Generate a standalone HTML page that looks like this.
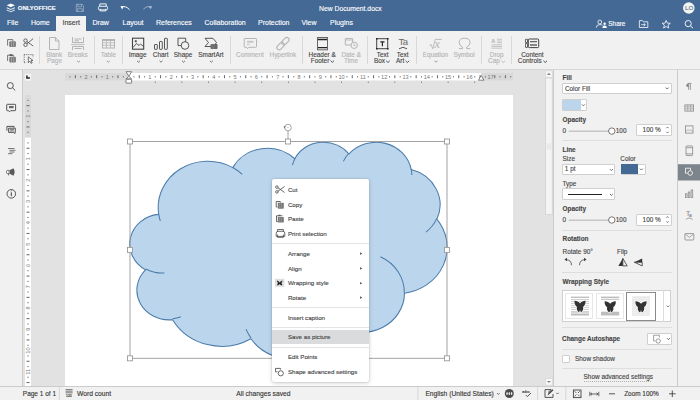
<!DOCTYPE html>
<html><head><meta charset="utf-8">
<style>
*{box-sizing:border-box}
html,body{margin:0;padding:0;width:700px;height:400px;overflow:hidden;background:#e2e2e2;font-family:"Liberation Sans",sans-serif;color:#444}
.a{position:absolute}
.t{position:absolute;white-space:nowrap;line-height:0;-webkit-text-stroke:0.12px currentColor}
#hdr{left:0;top:0;width:700px;height:31px;background:#446995}
#tb{left:0;top:31px;width:700px;height:39px;background:#f1f1f1;border-bottom:1px solid #d6d6d6}
#lsb{left:0;top:70px;width:23px;height:316px;background:#f1f1f1;border-right:1px solid #cbcbcb}
#rp{left:553px;top:70px;width:125px;height:316px;background:#f1f1f1;border-left:1px solid #cbcbcb;border-right:1px solid #cbcbcb}
#ric{left:678px;top:70px;width:22px;height:316px;background:#f1f1f1}
#sb{left:0;top:386px;width:700px;height:14px;background:#f1f1f1;border-top:1px solid #cbcbcb}
.tab{position:absolute;top:16px;height:15px;color:#fff;font-size:7px}
.tl{font-size:6.42px;color:#444}
.dis{color:#b4b4b4}
.sep{position:absolute;width:1px;background:#dadada}
</style></head><body>
<!-- header -->
<div id="hdr" class="a"></div>
<svg class="a" style="left:0;top:0" width="700" height="31" viewBox="0 0 700 31">
<g fill="none">
<!-- logo -->
<path d="M10.8 3.4L14.9 5.3L10.8 7.2L6.7 5.3Z" fill="#fff"/>
<path d="M6.9 7.2L10.8 9L14.7 7.2L14.9 7.4V8.2L10.8 10.1L6.7 8.2V7.4Z" fill="#fff" opacity="0.9"/>
<path d="M6.9 9.4L10.8 11.2L14.7 9.4L14.9 9.6V10.4L10.8 12.3L6.7 10.4V9.6Z" fill="#fff" opacity="0.8"/>
<!-- save (disabled) -->
<path d="M76.3 4.3H82.2L83.5 5.6V11.4H76.3Z M77.8 4.3V6.8H81.5V4.3 M77.6 11.4V8.7H82.2V11.4" stroke="#fff" stroke-width="0.8" opacity="0.45"/>
<!-- print -->
<path d="M99.8 6.3V3.9H106.2V6.3" stroke="#fff" stroke-width="0.9"/>
<rect x="98.4" y="6.3" width="9.2" height="3.6" rx="1.3" stroke="#fff" stroke-width="0.9"/>
<path d="M100.2 8.8V10.9H105.8V8.8" stroke="#fff" stroke-width="0.9"/>
<!-- undo -->
<path d="M121.6 7.2Q125.5 5.2 129.6 9.8" stroke="#fff" stroke-width="1"/>
<path d="M120.4 6.3L123.8 6L122.2 9.6Z" fill="#fff"/>
<!-- redo disabled -->
<path d="M151.1 7.2Q147.2 5.2 143.4 9" stroke="#fff" stroke-width="1" opacity="0.45"/>
<path d="M152.3 6.3L148.9 6L150.5 9.6Z" fill="#fff" opacity="0.45"/>
<!-- avatar -->
<circle cx="688.8" cy="8" r="5.8" fill="#f3f3f3"/>
<!-- share icon -->
<circle cx="599.8" cy="22" r="1.9" stroke="#fff" stroke-width="0.8"/>
<path d="M596.3 27.7Q596.3 24.6 599.8 24.6Q601.8 24.6 602.6 25.4" stroke="#fff" stroke-width="0.8"/>
<circle cx="604.6" cy="23.8" r="1.2" fill="#fff"/>
<path d="M602.4 27.9Q602.4 25.6 604.6 25.6Q606.9 25.6 606.9 27.9Z" fill="#fff"/>
<!-- folder -->
<path d="M639.4 20.6H642.5L643.5 21.8H647.8V27.5H639.4Z" stroke="#fff" stroke-width="0.8"/>
<path d="M641.3 24.7H645.2M643.8 23.3L645.3 24.7L643.8 26.1" stroke="#fff" stroke-width="0.8"/>
<!-- star -->
<path d="M666.2 20.4L667.3 23.1L670.3 23.3L668 25.2L668.8 28L666.2 26.5L663.6 28L664.4 25.2L662.1 23.3L665.1 23.1Z" stroke="#fff" stroke-width="0.8"/>
<!-- search -->
<circle cx="688.2" cy="23.6" r="3.1" stroke="#fff" stroke-width="0.9"/>
<path d="M690.4 25.8L693 28.2" stroke="#fff" stroke-width="1"/>
</g>
</svg>
<div class="t" style="left:17.8px;top:7.9px;font-size:5.9px;font-weight:bold;color:#fff;letter-spacing:0.05px">ONLYOFFICE</div>
<div class="t" style="left:319px;top:8.5px;font-size:6.8px;color:#fff">New Document.docx</div>
<div class="t" style="left:685px;top:7.6px;font-size:6.2px;color:#55708f">LO</div>
<!-- tabs -->
<div class="a" style="left:56px;top:16px;width:30px;height:16px;background:#f1f1f1"></div>
<div class="t" style="left:7px;top:23px;font-size:7px;color:#fff">File</div>
<div class="t" style="left:31px;top:23px;font-size:7px;color:#fff">Home</div>
<div class="t" style="left:62.5px;top:23px;font-size:7px;color:#444">Insert</div>
<div class="t" style="left:92.5px;top:23px;font-size:7px;color:#fff">Draw</div>
<div class="t" style="left:122.5px;top:23px;font-size:7px;color:#fff">Layout</div>
<div class="t" style="left:156px;top:23px;font-size:7px;color:#fff">References</div>
<div class="t" style="left:204.5px;top:23px;font-size:7px;color:#fff">Collaboration</div>
<div class="t" style="left:258px;top:23px;font-size:7px;color:#fff">Protection</div>
<div class="t" style="left:301.5px;top:23px;font-size:7px;color:#fff">View</div>
<div class="t" style="left:330px;top:23px;font-size:7px;color:#fff">Plugins</div>
<div class="t" style="left:608.3px;top:24.4px;font-size:6.42px;color:#fff">Share</div>
<!-- toolbar -->
<div id="tb" class="a"></div>
<svg class="a" style="left:0;top:0" width="700" height="70" viewBox="0 0 700 70">
<g fill="none" stroke-width="1">
<!-- separators -->
<g stroke="#d8d8d8"><path d="M39.5 36V64M94.5 36V64M122.5 36V64M230.5 36V64M302.5 36V64M367.5 36V64M416.5 36V64M481.5 36V64M511.5 36V64"/></g>
<!-- copy -->
<path d="M7.6 45.6V39.6H12.8V41" stroke="#666" stroke-width="0.9"/>
<rect x="9.3" y="41.3" width="6.6" height="5.8" rx="1" fill="#7a7a7a"/>
<path d="M11.5 41.5V47M13.7 41.5V47" stroke="#c8c8c8" stroke-width="0.5"/>
<!-- scissors -->
<circle cx="25.5" cy="40.6" r="1.7" stroke="#444" stroke-width="0.8"/>
<circle cx="25.5" cy="44.8" r="1.7" stroke="#444" stroke-width="0.8"/>
<path d="M27 41.6L33.2 46M27 43.8L33.2 38.6" stroke="#444" stroke-width="0.8"/>
<!-- paste -->
<path d="M7.6 61V55.2H9.4M12.4 55.2H13.4V56.6" stroke="#666" stroke-width="0.9"/>
<rect x="9.3" y="54.2" width="3.4" height="1.8" rx="0.4" fill="#555"/>
<rect x="9.3" y="56.8" width="6.6" height="5.8" rx="1" fill="#7a7a7a"/>
<path d="M11.5 57V62.6M13.7 57V62.6" stroke="#c8c8c8" stroke-width="0.5"/>
<!-- select all -->
<path d="M24.2 54.6H33M24.2 54.6V62.6M33 54.6V57.2M24.2 62.6H26.4" stroke="#555" stroke-width="0.9" stroke-dasharray="1 1.1"/>
<path d="M28.3 56.8V62.8L29.9 61.2L31.2 63.4L32.2 62.9L31 60.7L33 60.5Z" stroke="#444" stroke-width="0.7" fill="#f1f1f1"/>
<!-- blank page -->
<path d="M49.5 37.5H55.5L59 41V49.5H49.5Z M55.5 37.5V41H59" stroke="#b4b4b4"/>
<!-- breaks -->
<path d="M72.5 37V42.5H83.5V37M74.5 39H81.5M74.5 40.8H79" stroke="#b4b4b4"/>
<path d="M71 44.5H84.5" stroke="#c4c4c4" stroke-width="1.2"/>
<path d="M72.5 50V46.5H83.5V50M74.5 48.5H81.5" stroke="#b4b4b4"/>
<!-- table -->
<rect x="102.5" y="39.5" width="12" height="8.5" stroke="#b4b4b4"/>
<path d="M102.5 40.2H114.5" stroke="#b4b4b4" stroke-width="1.5"/>
<path d="M102.5 42.8H114.5M102.5 45.3H114.5M106.5 40V48M110.5 40V48" stroke="#b4b4b4" stroke-width="0.8"/>
<!-- image -->
<rect x="132.5" y="38.2" width="11.2" height="11" stroke="#444" stroke-width="1.1"/>
<path d="M133 47.5L136.5 43.5L139 45.5L140.5 44L143.5 46.5" stroke="#444" stroke-width="0.9"/>
<path d="M135.8 40V42.4M134.6 41.2H137" stroke="#444" stroke-width="0.9"/>
<!-- chart -->
<rect x="154.5" y="44.5" width="2.8" height="4.8" rx="0.5" stroke="#444" stroke-width="0.9"/>
<rect x="159.5" y="41.5" width="2.8" height="7.8" rx="0.5" stroke="#444" stroke-width="0.9"/>
<rect x="164.5" y="38.3" width="2.8" height="11" rx="0.5" stroke="#444" stroke-width="0.9"/>
<!-- shape -->
<path d="M181.2 45.6H178V38.2H185.7V41.8" stroke="#444" stroke-width="0.9"/>
<circle cx="185" cy="45.5" r="3.8" stroke="#444" stroke-width="0.9" fill="none"/>
<!-- smartart -->
<path d="M205 38.3H213L216.5 42.5L213.5 46.5H205L208.5 42.5Z" stroke="#444" stroke-width="0.9"/>
<rect x="210.5" y="44" width="7" height="5" rx="0.8" fill="#666"/>
<path d="M212 44V49M214 44V49" stroke="#999" stroke-width="0.5"/>
<!-- comment -->
<path d="M245 38.5H255.7Q256.5 38.5 256.5 39.3V46.5Q256.5 47.3 255.7 47.3H248.8L247.5 48.7L246.8 47.3H245Q244.2 47.3 244.2 46.5V39.3Q244.2 38.5 245 38.5Z" stroke="#b4b4b4"/>
<path d="M247 41.8H253.5" stroke="#c8c8c8" stroke-width="2"/>
<path d="M247 44.4H249.5" stroke="#b4b4b4" stroke-width="0.8"/>
<!-- hyperlink -->
<g transform="rotate(-45 283 43.6)" stroke="#b4b4b4" stroke-width="1.1"><rect x="275.3" y="41.3" width="8.5" height="4.6" rx="2.3"/><rect x="282.2" y="41.3" width="8.5" height="4.6" rx="2.3"/></g>
<!-- header footer -->
<rect x="317.5" y="37.5" width="10" height="12.3" stroke="#666" stroke-width="1"/>
<path d="M318 39.5H327M318 47.6H327" stroke="#222" stroke-width="1.3"/>
<!-- date time -->
<path d="M351 45H345.3V38.6H352.6V42" stroke="#b4b4b4"/>
<path d="M345.3 40H352.6M347.5 38V39M350.5 38V39" stroke="#b4b4b4" stroke-width="0.8"/>
<circle cx="354.2" cy="45.3" r="3.2" stroke="#b4b4b4" fill="#f1f1f1"/>
<path d="M354 43.6V45.6H355.6" stroke="#b4b4b4" stroke-width="0.8"/>
<!-- text box -->
<rect x="376.7" y="38.7" width="11" height="10" stroke="#444" stroke-width="1"/>
<path d="M376 38H377.5V39.5H376ZM387 38H388.5V39.5H387ZM376 48H377.5V49.5H376ZM387 48H388.5V49.5H387Z" fill="#222" stroke="none"/>
<path d="M380.3 41.8H384.5M382.4 41.8V46.2" stroke="#222" stroke-width="1.2"/>
<!-- text art -->

<path d="M399 48.8Q403 45.8 407 48.8" stroke="#444" stroke-width="0.9"/>
<!-- equation -->
<path d="M429.6 45.2L431 44.4L432.8 48.8L435.3 39.4H441.8" stroke="#b4b4b4" stroke-width="0.9"/>
<!-- symbol -->
<path d="M459 48.6H462.6V47.3Q459.2 45.6 459.2 42.6Q459.2 38.2 464.6 38.2Q470 38.2 470 42.6Q470 45.6 466.6 47.3V48.6H470.2" stroke="#b4b4b4" stroke-width="1"/>
<!-- drop cap -->
<path d="M497 39.3H502M497 41H502M497 42.7H502M491.5 44.8H502M491.5 46.5H502M491.5 48.2H502" stroke="#c0c0c0" stroke-width="0.9"/>
<!-- content controls -->
<rect x="528.3" y="39" width="10.4" height="8.6" rx="1" stroke="#444" stroke-width="1"/>
<path d="M530 41.7H537M530 45H537" stroke="#666" stroke-width="1.3"/>
<path d="M525.5 39.3H527.5V42.5H525.5ZM525.5 43.5H527.5V47.4H525.5Z" stroke="#444" stroke-width="0.8"/>
<g stroke="#444" stroke-width="0.9" fill="none"><path d="M330.5 60.6L332.3 62.3L334.1 60.6M386.2 60.8L388 62.5L389.8 60.8M405.6 60.8L407.4 62.5L409.2 60.8M543.4 60.8L545.2 62.5L547 60.8"/></g>
<g stroke="#b4b4b4" stroke-width="0.9" fill="none"><path d="M501.4 60.8L503.2 62.5L505 60.8"/></g>
<!-- chevrons -->
<g stroke="#888" stroke-width="0.8"><path d="M77 60.8L78.5 62.2L80 60.8M106.8 60.8L108.3 62.2L109.8 60.8"/></g>
<g stroke="#555" stroke-width="0.8"><path d="M137 60.8L138.5 62.2L140 60.8M159.5 60.8L161 62.2L162.5 60.8M182 60.8L183.5 62.2L185 60.8M209.9 60.8L211.4 62.2L212.9 60.8"/></g>
<g stroke="#888" stroke-width="0.8"><path d="M434.5 60.8L436 62.2L437.5 60.8"/></g>
</g>
</svg>
<div class="t tl dis" style="left:46.2px;top:55.4px">Blank</div>
<div class="t tl dis" style="left:47px;top:61.4px">Page</div>
<div class="t tl dis" style="left:67.8px;top:55.4px">Breaks</div>
<div class="t tl dis" style="left:100.8px;top:55.4px">Table</div>
<div class="t tl" style="left:128.7px;top:55.4px">Image</div>
<div class="t tl" style="left:152.8px;top:55.4px">Chart</div>
<div class="t tl" style="left:173.8px;top:55.4px">Shape</div>
<div class="t tl" style="left:198.3px;top:55.4px">SmartArt</div>
<div class="t tl dis" style="left:236px;top:55.4px">Comment</div>
<div class="t tl dis" style="left:269.5px;top:55.4px">Hyperlink</div>
<div class="t tl" style="left:308.6px;top:55.4px">Header &amp;</div>
<div class="t tl" style="left:310.8px;top:61.4px">Footer</div>
<div class="t tl dis" style="left:341.4px;top:55.4px">Date &amp;</div>
<div class="t tl dis" style="left:344px;top:61.4px">Time</div>
<div class="t tl" style="left:376.8px;top:55.4px">Text</div>
<div class="t tl" style="left:374px;top:61.4px">Box</div>
<div class="t tl" style="left:396.8px;top:55.4px">Text</div>
<div class="t tl" style="left:396px;top:61.4px">Art</div>
<div class="t tl dis" style="left:422.8px;top:55.4px">Equation</div>
<div class="t tl dis" style="left:453.4px;top:55.4px">Symbol</div>
<div class="t tl dis" style="left:489.8px;top:55.4px">Drop</div>
<div class="t tl dis" style="left:488px;top:61.4px">Cap</div>
<div class="t tl" style="left:521.2px;top:55.4px">Content</div>
<div class="t tl" style="left:517.8px;top:61.4px">Controls</div>
<div class="t" style="left:398.6px;top:42.2px;font-size:9.6px;color:#666;letter-spacing:-0.7px;-webkit-text-stroke:0">Ta</div>
<div class="t" style="left:434.6px;top:44.2px;font-size:12.4px;color:#b4b4b4;font-family:'Liberation Serif';font-style:italic;-webkit-text-stroke:0">x</div>
<div class="t" style="left:491.3px;top:41.2px;font-size:5.5px;color:#b4b4b4;font-weight:bold">A</div>
<!-- canvas -->
<svg class="a" style="left:0;top:69px" width="553" height="317" viewBox="0 69 553 317">
<!-- h ruler -->
<rect x="65" y="73" width="448" height="7.5" fill="#d9d9d9"/>
<rect x="494.30" y="75.2" width="1" height="3" fill="#666"/><rect x="499.60" y="76.2" width="1" height="1.2" fill="#666"/><rect x="504.90" y="75.2" width="1" height="3" fill="#666"/><rect x="510.20" y="76.2" width="1" height="1.2" fill="#666"/>
<rect x="128.6" y="73" width="352.6" height="7.5" fill="#fff"/>
<rect x="69.52" y="76.2" width="1" height="1.2" fill="#666"/><rect x="74.85" y="75.2" width="1" height="3" fill="#666"/><rect x="80.17" y="76.2" width="1" height="1.2" fill="#666"/><rect x="90.82" y="76.2" width="1" height="1.2" fill="#666"/><rect x="96.15" y="75.2" width="1" height="3" fill="#666"/><rect x="101.47" y="76.2" width="1" height="1.2" fill="#666"/><rect x="112.12" y="76.2" width="1" height="1.2" fill="#666"/><rect x="117.45" y="75.2" width="1" height="3" fill="#666"/><rect x="122.77" y="76.2" width="1" height="1.2" fill="#666"/><rect x="133.42" y="76.2" width="1" height="1.2" fill="#666"/><rect x="138.75" y="75.2" width="1" height="3" fill="#666"/><rect x="144.07" y="76.2" width="1" height="1.2" fill="#666"/><rect x="154.72" y="76.2" width="1" height="1.2" fill="#666"/><rect x="160.05" y="75.2" width="1" height="3" fill="#666"/><rect x="165.37" y="76.2" width="1" height="1.2" fill="#666"/><rect x="176.02" y="76.2" width="1" height="1.2" fill="#666"/><rect x="181.35" y="75.2" width="1" height="3" fill="#666"/><rect x="186.68" y="76.2" width="1" height="1.2" fill="#666"/><rect x="197.32" y="76.2" width="1" height="1.2" fill="#666"/><rect x="202.65" y="75.2" width="1" height="3" fill="#666"/><rect x="207.97" y="76.2" width="1" height="1.2" fill="#666"/><rect x="218.62" y="76.2" width="1" height="1.2" fill="#666"/><rect x="223.95" y="75.2" width="1" height="3" fill="#666"/><rect x="229.27" y="76.2" width="1" height="1.2" fill="#666"/><rect x="239.93" y="76.2" width="1" height="1.2" fill="#666"/><rect x="245.25" y="75.2" width="1" height="3" fill="#666"/><rect x="250.57" y="76.2" width="1" height="1.2" fill="#666"/><rect x="261.23" y="76.2" width="1" height="1.2" fill="#666"/><rect x="266.55" y="75.2" width="1" height="3" fill="#666"/><rect x="271.88" y="76.2" width="1" height="1.2" fill="#666"/><rect x="282.52" y="76.2" width="1" height="1.2" fill="#666"/><rect x="287.85" y="75.2" width="1" height="3" fill="#666"/><rect x="293.18" y="76.2" width="1" height="1.2" fill="#666"/><rect x="303.83" y="76.2" width="1" height="1.2" fill="#666"/><rect x="309.15" y="75.2" width="1" height="3" fill="#666"/><rect x="314.48" y="76.2" width="1" height="1.2" fill="#666"/><rect x="325.13" y="76.2" width="1" height="1.2" fill="#666"/><rect x="330.45" y="75.2" width="1" height="3" fill="#666"/><rect x="335.78" y="76.2" width="1" height="1.2" fill="#666"/><rect x="346.43" y="76.2" width="1" height="1.2" fill="#666"/><rect x="351.75" y="75.2" width="1" height="3" fill="#666"/><rect x="357.08" y="76.2" width="1" height="1.2" fill="#666"/><rect x="367.73" y="76.2" width="1" height="1.2" fill="#666"/><rect x="373.05" y="75.2" width="1" height="3" fill="#666"/><rect x="378.38" y="76.2" width="1" height="1.2" fill="#666"/><rect x="389.02" y="76.2" width="1" height="1.2" fill="#666"/><rect x="394.35" y="75.2" width="1" height="3" fill="#666"/><rect x="399.67" y="76.2" width="1" height="1.2" fill="#666"/><rect x="410.33" y="76.2" width="1" height="1.2" fill="#666"/><rect x="415.65" y="75.2" width="1" height="3" fill="#666"/><rect x="420.98" y="76.2" width="1" height="1.2" fill="#666"/><rect x="431.63" y="76.2" width="1" height="1.2" fill="#666"/><rect x="436.95" y="75.2" width="1" height="3" fill="#666"/><rect x="442.28" y="76.2" width="1" height="1.2" fill="#666"/><rect x="452.92" y="76.2" width="1" height="1.2" fill="#666"/><rect x="458.25" y="75.2" width="1" height="3" fill="#666"/><rect x="463.58" y="76.2" width="1" height="1.2" fill="#666"/><rect x="474.23" y="76.2" width="1" height="1.2" fill="#666"/><rect x="479.55" y="75.2" width="1" height="3" fill="#666"/><rect x="484.88" y="76.2" width="1" height="1.2" fill="#666"/>
<g font-family="Liberation Sans" font-size="5.6" fill="#777"><text x="86.00" y="79.2" text-anchor="middle">2</text><text x="107.30" y="79.2" text-anchor="middle">1</text><text x="149.90" y="79.2" text-anchor="middle">1</text><text x="171.20" y="79.2" text-anchor="middle">2</text><text x="192.50" y="79.2" text-anchor="middle">3</text><text x="213.80" y="79.2" text-anchor="middle">4</text><text x="235.10" y="79.2" text-anchor="middle">5</text><text x="256.40" y="79.2" text-anchor="middle">6</text><text x="277.70" y="79.2" text-anchor="middle">7</text><text x="299.00" y="79.2" text-anchor="middle">8</text><text x="320.30" y="79.2" text-anchor="middle">9</text><text x="341.60" y="79.2" text-anchor="middle">10</text><text x="362.90" y="79.2" text-anchor="middle">11</text><text x="384.20" y="79.2" text-anchor="middle">12</text><text x="405.50" y="79.2" text-anchor="middle">13</text><text x="426.80" y="79.2" text-anchor="middle">14</text><text x="448.10" y="79.2" text-anchor="middle">15</text><text x="469.40" y="79.2" text-anchor="middle">16</text><text x="490.70" y="79.2" text-anchor="middle">17</text></g>
<rect x="154.82" y="81.6" width="0.8" height="1.3" fill="#666"/><rect x="181.45" y="81.6" width="0.8" height="1.3" fill="#666"/><rect x="208.07" y="81.6" width="0.8" height="1.3" fill="#666"/><rect x="234.70" y="81.6" width="0.8" height="1.3" fill="#666"/><rect x="261.33" y="81.6" width="0.8" height="1.3" fill="#666"/><rect x="287.95" y="81.6" width="0.8" height="1.3" fill="#666"/><rect x="314.58" y="81.6" width="0.8" height="1.3" fill="#666"/><rect x="341.20" y="81.6" width="0.8" height="1.3" fill="#666"/><rect x="367.83" y="81.6" width="0.8" height="1.3" fill="#666"/><rect x="394.45" y="81.6" width="0.8" height="1.3" fill="#666"/><rect x="421.08" y="81.6" width="0.8" height="1.3" fill="#666"/><rect x="447.70" y="81.6" width="0.8" height="1.3" fill="#666"/><rect x="474.33" y="81.6" width="0.8" height="1.3" fill="#666"/>
<!-- indent markers -->
<path d="M126 71.7H131.6L128.8 76.3Z" fill="#fff" stroke="#666" stroke-width="0.8"/>
<path d="M128.8 76.3L131.6 78.9H126Z" fill="#fff" stroke="#666" stroke-width="0.8"/>
<rect x="126" y="79.3" width="5.6" height="3.8" rx="0.3" fill="#fff" stroke="#666" stroke-width="0.8"/>
<path d="M481.2 75.4L483.9 80.2H478.5Z" fill="#fff" stroke="#666" stroke-width="0.8"/>
<!-- tab selector -->
<rect x="24.3" y="73.3" width="7.4" height="8" rx="0.8" fill="#f3f3f3" stroke="#d8d8d8" stroke-width="0.5"/>
<path d="M26.9 75.6V78.1H29.9" stroke="#222" stroke-width="1.5" fill="none"/>
<!-- v ruler -->
<rect x="25" y="95" width="6" height="291" fill="#d9d9d9"/>
<rect x="25" y="137.6" width="6" height="250" fill="#fff"/>
<rect x="27.4" y="99.82" width="1.2" height="1" fill="#666"/><rect x="26.5" y="105.15" width="3" height="1" fill="#666"/><rect x="27.4" y="110.47" width="1.2" height="1" fill="#666"/><rect x="27.4" y="121.12" width="1.2" height="1" fill="#666"/><rect x="26.5" y="126.45" width="3" height="1" fill="#666"/><rect x="27.4" y="131.78" width="1.2" height="1" fill="#666"/><rect x="27.4" y="142.42" width="1.2" height="1" fill="#666"/><rect x="26.5" y="147.75" width="3" height="1" fill="#666"/><rect x="27.4" y="153.07" width="1.2" height="1" fill="#666"/><rect x="27.4" y="163.72" width="1.2" height="1" fill="#666"/><rect x="26.5" y="169.05" width="3" height="1" fill="#666"/><rect x="27.4" y="174.37" width="1.2" height="1" fill="#666"/><rect x="27.4" y="185.02" width="1.2" height="1" fill="#666"/><rect x="26.5" y="190.35" width="3" height="1" fill="#666"/><rect x="27.4" y="195.68" width="1.2" height="1" fill="#666"/><rect x="27.4" y="206.32" width="1.2" height="1" fill="#666"/><rect x="26.5" y="211.65" width="3" height="1" fill="#666"/><rect x="27.4" y="216.97" width="1.2" height="1" fill="#666"/><rect x="27.4" y="227.62" width="1.2" height="1" fill="#666"/><rect x="26.5" y="232.95" width="3" height="1" fill="#666"/><rect x="27.4" y="238.27" width="1.2" height="1" fill="#666"/><rect x="27.4" y="248.93" width="1.2" height="1" fill="#666"/><rect x="26.5" y="254.25" width="3" height="1" fill="#666"/><rect x="27.4" y="259.58" width="1.2" height="1" fill="#666"/><rect x="27.4" y="270.23" width="1.2" height="1" fill="#666"/><rect x="26.5" y="275.55" width="3" height="1" fill="#666"/><rect x="27.4" y="280.88" width="1.2" height="1" fill="#666"/><rect x="27.4" y="291.52" width="1.2" height="1" fill="#666"/><rect x="26.5" y="296.85" width="3" height="1" fill="#666"/><rect x="27.4" y="302.18" width="1.2" height="1" fill="#666"/><rect x="27.4" y="312.83" width="1.2" height="1" fill="#666"/><rect x="26.5" y="318.15" width="3" height="1" fill="#666"/><rect x="27.4" y="323.48" width="1.2" height="1" fill="#666"/><rect x="27.4" y="334.13" width="1.2" height="1" fill="#666"/><rect x="26.5" y="339.45" width="3" height="1" fill="#666"/><rect x="27.4" y="344.78" width="1.2" height="1" fill="#666"/><rect x="27.4" y="355.43" width="1.2" height="1" fill="#666"/><rect x="26.5" y="360.75" width="3" height="1" fill="#666"/><rect x="27.4" y="366.08" width="1.2" height="1" fill="#666"/><rect x="27.4" y="376.73" width="1.2" height="1" fill="#666"/><rect x="26.5" y="382.05" width="3" height="1" fill="#666"/>
<g font-family="Liberation Sans" font-size="5.6" fill="#777"><text transform="translate(29.9 116.30) rotate(-90)" x="0" y="0" text-anchor="middle">1</text><text transform="translate(29.9 158.90) rotate(-90)" x="0" y="0" text-anchor="middle">1</text><text transform="translate(29.9 180.20) rotate(-90)" x="0" y="0" text-anchor="middle">2</text><text transform="translate(29.9 201.50) rotate(-90)" x="0" y="0" text-anchor="middle">3</text><text transform="translate(29.9 222.80) rotate(-90)" x="0" y="0" text-anchor="middle">4</text><text transform="translate(29.9 244.10) rotate(-90)" x="0" y="0" text-anchor="middle">5</text><text transform="translate(29.9 265.40) rotate(-90)" x="0" y="0" text-anchor="middle">6</text><text transform="translate(29.9 286.70) rotate(-90)" x="0" y="0" text-anchor="middle">7</text><text transform="translate(29.9 308.00) rotate(-90)" x="0" y="0" text-anchor="middle">8</text><text transform="translate(29.9 329.30) rotate(-90)" x="0" y="0" text-anchor="middle">9</text><text transform="translate(29.9 350.60) rotate(-90)" x="0" y="0" text-anchor="middle">10</text><text transform="translate(29.9 371.90) rotate(-90)" x="0" y="0" text-anchor="middle">11</text></g>
<!-- page -->
<rect x="65" y="95" width="448" height="292" fill="#fff"/>
<!-- cloud -->
<path d="M158.62 213.68 A49.55 46.16 0 0 1 232.77 167.63 A39.13 36.50 0 0 1 294.78 158.74 A32.03 29.86 0 0 1 348.91 153.96 A35.64 33.13 0 0 1 411.18 169.51 A39.13 36.53 0 0 1 436.86 219.16 A49.71 46.31 0 0 1 404.47 293.21 A42.45 39.52 0 0 1 339.54 326.42 A49.55 46.29 0 0 1 250.93 338.73 A56.65 52.96 0 0 1 172.60 319.67 A31.99 29.73 0 0 1 145.51 269.83 A31.88 29.86 0 0 1 158.35 214.36 Z" fill="#bbd6ec" stroke="#4a7bab" stroke-width="1.05"/>
<path d="M164.44 272.99 A31.88 29.86 0 0 1 145.85 268.99 M180.84 316.80 A31.99 29.73 0 0 1 172.70 318.72 M250.91 337.85 A49.55 46.29 0 0 1 246.01 329.11 M341.53 316.06 A49.55 46.29 0 0 1 339.57 325.65 M380.44 256.80 A42.45 39.52 0 0 1 404.30 292.64 M436.71 218.63 A39.13 36.53 0 0 1 426.09 232.07 M411.22 168.76 A35.64 33.13 0 0 1 411.78 175.10 M343.37 161.35 A35.64 33.13 0 0 1 348.82 153.26 M292.47 165.21 A32.03 29.86 0 0 1 295.11 158.23 M232.73 167.58 A49.55 46.16 0 0 1 242.27 174.35 M160.28 220.81 A49.55 46.16 0 0 1 158.62 213.68" fill="none" stroke="#4a7bab" stroke-width="1.05"/>
<!-- frame -->
<g fill="none" stroke="#9a9a9a" stroke-width="0.9">
<rect x="130" y="141.5" width="317" height="216.8"/>
<path d="M288 131V139"/>
<circle cx="288" cy="127.6" r="3.3"/>
</g>
<circle cx="288" cy="127.6" r="0.6" fill="#9a9a9a"/>
<path d="M283.6 126.3L285.6 126.6L284.6 128.5Z" fill="#666"/>
<g fill="#fff" stroke="#9a9a9a" stroke-width="0.9">
<rect x="127.5" y="139" width="5" height="5"/><rect x="285.5" y="139" width="5" height="5"/><rect x="444.5" y="139" width="5" height="5"/>
<rect x="127.5" y="247.4" width="5" height="5"/><rect x="444.5" y="247.4" width="5" height="5"/>
<rect x="127.5" y="355.8" width="5" height="5"/><rect x="285.5" y="355.8" width="5" height="5"/><rect x="444.5" y="355.8" width="5" height="5"/>
</g>
<!-- scrollbar -->
<rect x="545.6" y="70.8" width="6.6" height="6.6" fill="#f7f7f7" stroke="#d4d4d4" stroke-width="0.6"/>
<path d="M546.9 74.9L548.9 72.8L550.9 74.9Z" fill="#888"/>
<rect x="545.6" y="78" width="6.6" height="136.6" fill="#f4f4f4" stroke="#cfcfcf" stroke-width="0.7"/>
<path d="M547.5 143.3V149.5M549 143.3V149.5M550.5 143.3V149.5" stroke="#d6d6d6" stroke-width="0.5"/>
<rect x="545.6" y="378.5" width="6.6" height="6.6" fill="#f7f7f7" stroke="#d4d4d4" stroke-width="0.6"/>
<path d="M546.9 380.9L548.9 383L550.9 380.9Z" fill="#888"/>
</svg>
<!-- context menu -->
<div class="a" style="left:272px;top:179.2px;width:97.3px;height:202.6px;background:#fff;border-radius:2px;box-shadow:0 0 0 0.5px rgba(0,0,0,0.08),0 1px 4px rgba(0,0,0,0.2)"></div>
<div class="a" style="left:272px;top:243px;width:97.3px;height:0.8px;background:#e4e4e4"></div>
<div class="a" style="left:272px;top:307px;width:97.3px;height:0.8px;background:#e4e4e4"></div>
<div class="a" style="left:272px;top:327px;width:97.3px;height:0.8px;background:#e4e4e4"></div>
<div class="a" style="left:272px;top:330px;width:97.3px;height:14.3px;background:#dadbdc"></div>
<div class="a" style="left:272px;top:346.5px;width:97.3px;height:0.8px;background:#e4e4e4"></div>
<svg class="a" style="left:270px;top:180px" width="100" height="200" viewBox="270 180 100 200">
<g fill="none" stroke="#444" stroke-width="0.8">
<circle cx="276.9" cy="187.1" r="1.3"/><circle cx="276.9" cy="191.9" r="1.3"/>
<path d="M278 187.8L284.6 192.5M278 191.2L284.6 186.5"/>
<path d="M276.2 201.5H280.3V202.5M276.2 201.5V207H277.5"/>
<path d="M276.5 215.8V221.5H277.8M276.5 215.8H278.2M281 215.8H282.5"/>
<path d="M276.2 233.2V236.4H284.8V233.2Q284.8 231.3 283 231.3H278Q276.2 231.3 276.2 233.2ZM277.6 231.3V229.5H283.4V231.3M277.6 234.5V237.3H283.4V234.5"/>
<path d="M275.5 368.4V371.8H277.5 M275.5 368.4H280.6V369.6"/>
<circle cx="280.8" cy="373.3" r="2.6" fill="#fff"/>
</g>
<rect x="277.8" y="202.7" width="6" height="6" rx="0.6" fill="#777"/>
<path d="M279.3 202.7V208.7M281.3 202.7V208.7" stroke="#bbb" stroke-width="0.4"/>
<rect x="278.2" y="214.8" width="2.6" height="1.5" fill="#555"/>
<rect x="277.8" y="216.9" width="6" height="5.6" rx="0.6" fill="#777"/>
<path d="M279.3 216.9V222.5M281.3 216.9V222.5" stroke="#bbb" stroke-width="0.4"/>
<rect x="275" y="278.8" width="9.4" height="8" fill="#dedede"/>
<path d="M277 280.5Q278.7 281 279.7 282.6Q280.7 281 282.4 280.5Q282.6 282.4 281.2 282.9Q282.6 283.6 282 285.6Q280.5 285.2 279.7 283.9Q278.9 285.2 277.4 285.6Q276.8 283.6 278.2 282.9Q276.8 282.4 277 280.5Z" fill="#222"/>
<g fill="#444"><path d="M360.2 252.3L362.2 253.6L360.2 254.9Z"/><path d="M360.2 267.1L362.2 268.4L360.2 269.7Z"/><path d="M360.2 282L362.2 283.3L360.2 284.6Z"/><path d="M360.2 296.3L362.2 297.6L360.2 298.9Z"/></g>
</svg>
<div class="t" style="left:287.9px;top:190.2px;font-size:6.2px">Cut</div>
<div class="t" style="left:287.9px;top:204.9px;font-size:6.2px">Copy</div>
<div class="t" style="left:287.9px;top:219.2px;font-size:6.2px">Paste</div>
<div class="t" style="left:287.9px;top:233.7px;font-size:6.2px">Print selection</div>
<div class="t" style="left:287.9px;top:253.7px;font-size:6.2px">Arrange</div>
<div class="t" style="left:287.9px;top:268.5px;font-size:6.2px">Align</div>
<div class="t" style="left:287.9px;top:283.4px;font-size:6.2px">Wrapping style</div>
<div class="t" style="left:287.9px;top:297.7px;font-size:6.2px">Rotate</div>
<div class="t" style="left:287.9px;top:317.7px;font-size:6.2px">Insert caption</div>
<div class="t" style="left:287.9px;top:337.3px;font-size:6.2px">Save as picture</div>
<div class="t" style="left:287.9px;top:357.1px;font-size:6.2px">Edit Points</div>
<div class="t" style="left:287.9px;top:371.7px;font-size:6.2px">Shape advanced settings</div>
<!-- left sidebar -->
<div id="lsb" class="a"></div>
<svg class="a" style="left:0;top:69px" width="23" height="317" viewBox="0 69 23 317">
<g fill="none" stroke="#444" stroke-width="0.9">
<circle cx="10.3" cy="85.6" r="3"/>
<path d="M12.5 87.8L15.2 90.4"/>
<path d="M7.4 104.3H14.9Q15.6 104.3 15.6 105V110Q15.6 110.7 14.9 110.7H10.6L9.5 111.8L8.6 110.7H7.4Q6.7 110.7 6.7 110V105Q6.7 104.3 7.4 104.3Z"/>
<path d="M6.9 130.6V126.4H14.1V127.6"/>
<path d="M8.6 128.2H15.3V132.4H14.8V133.6L13.6 132.4H8.6Z"/>
<path d="M9.8 129.6H14M9.8 131H14" stroke-width="0.7"/>
<path d="M8 148.5H14.5M9.5 150.3H15.5M9.5 152H14.5M8 153.7H12.5" stroke-width="0.7"/>
<circle cx="11.3" cy="193.8" r="4.3"/>
<path d="M11.3 192.3V196.2" stroke-width="1"/>
</g>
<rect x="9" y="106" width="4.6" height="2.2" fill="#666"/>
<circle cx="11.3" cy="190.8" r="0.55" fill="#444"/>
<path d="M9.6 170.2L13 168.6H13.6Q15.6 172 13.6 175.4H13L9.6 173.8Z" fill="#5a5a5a"/>
<rect x="6.6" y="170.4" width="3.2" height="3.2" rx="0.8" fill="#fff" stroke="#555" stroke-width="0.8"/>
<path d="M8 172H9" stroke="#555" stroke-width="0.7"/>
<path d="M8.2 173.8L8.8 175.4" stroke="#555" stroke-width="0.9"/>
</svg>
<!-- right panel -->
<div id="rp" class="a"></div>
<div id="ric" class="a"></div>
<!-- panel content -->
<div class="t" style="left:562.5px;top:78.2px;font-size:6.42px;font-weight:bold">Fill</div>
<div class="a cb" style="left:562.4px;top:82.5px;width:109.2px;height:11.9px"></div>
<div class="t" style="left:564.9px;top:88.5px;font-size:6.42px">Color Fill</div>
<div class="a cb" style="left:562.4px;top:99.2px;width:24.7px;height:11.9px"></div>
<div class="a" style="left:563.3px;top:100px;width:17.5px;height:9.9px;background:#bbd6ec"></div>
<div class="t" style="left:562.5px;top:120px;font-size:6.42px;font-weight:bold">Opacity</div>
<div class="t" style="left:562.5px;top:131px;font-size:6.42px">0</div>
<div class="t" style="left:615.8px;top:131px;font-size:6.42px">100</div>
<div class="a cb" style="left:636.4px;top:124.3px;width:35.2px;height:12px"></div>
<div class="t" style="left:642.6px;top:130.4px;font-size:6.42px">100 %</div>
<div class="a hr" style="top:140px"></div>
<div class="t" style="left:562.5px;top:149.8px;font-size:6.42px;font-weight:bold">Line</div>
<div class="t" style="left:562.5px;top:158.8px;font-size:6.42px">Size</div>
<div class="t" style="left:620.3px;top:158.8px;font-size:6.42px">Color</div>
<div class="a cb" style="left:562.4px;top:163.5px;width:52.2px;height:11.4px"></div>
<div class="t" style="left:564.8px;top:169.4px;font-size:6.42px">1 pt</div>
<div class="a cb" style="left:620.5px;top:163.5px;width:25px;height:11.4px"></div>
<div class="a" style="left:621.3px;top:164.3px;width:17.2px;height:9.8px;background:#446995"></div>
<div class="t" style="left:562.5px;top:184px;font-size:6.42px">Type</div>
<div class="a cb" style="left:562.4px;top:188.4px;width:52.2px;height:11.9px"></div>
<div class="a" style="left:567.8px;top:193.7px;width:34.5px;height:1.4px;background:#222"></div>
<div class="t" style="left:562.5px;top:209.2px;font-size:6.42px;font-weight:bold">Opacity</div>
<div class="t" style="left:562.5px;top:219.9px;font-size:6.42px">0</div>
<div class="t" style="left:615.8px;top:219.9px;font-size:6.42px">100</div>
<div class="a cb" style="left:636.4px;top:213.9px;width:35.2px;height:11.8px"></div>
<div class="t" style="left:642.6px;top:219.8px;font-size:6.42px">100 %</div>
<div class="a hr" style="top:230px"></div>
<div class="t" style="left:562.5px;top:239px;font-size:6.42px;font-weight:bold">Rotation</div>
<div class="t" style="left:562.5px;top:252.1px;font-size:6.42px">Rotate 90°</div>
<div class="t" style="left:617.1px;top:252.1px;font-size:6.42px">Flip</div>
<div class="a hr" style="top:272px"></div>
<div class="t" style="left:562.5px;top:282px;font-size:6.42px;font-weight:bold">Wrapping Style</div>
<div class="a cb" style="left:562.3px;top:290.3px;width:109px;height:31.7px;border-radius:0"></div>
<div class="a" style="left:565.2px;top:292.5px;width:28.3px;height:26.9px;background:#fff;border:0.8px solid #e6e6e6"></div>
<div class="a" style="left:596px;top:292.5px;width:28px;height:26.9px;background:#fff;border:0.8px solid #e6e6e6"></div>
<div class="a" style="left:626.1px;top:291.7px;width:29.7px;height:29.8px;background:#fff;border:1px solid #8a8a8a"></div>
<div class="a" style="left:663px;top:290.3px;width:0.8px;height:31.7px;background:#dcdcdc"></div>
<div class="a hr" style="top:327px"></div>
<div class="t" style="left:562px;top:338.6px;font-size:6.42px;font-weight:bold">Change Autoshape</div>
<div class="a cb" style="left:646.6px;top:332.6px;width:25px;height:12px"></div>
<div class="a hr" style="top:349px"></div>
<div class="a cb" style="left:562.4px;top:354.6px;width:7.8px;height:8px;border-radius:1px"></div>
<div class="t" style="left:575px;top:358.5px;font-size:6.42px">Show shadow</div>
<div class="a hr" style="top:368px"></div>
<div class="t" style="left:583.6px;top:376.7px;font-size:6.42px">Show advanced settings</div>
<div class="a" style="left:583.6px;top:380.6px;width:67px;height:0;border-top:0.8px dotted #b0b0b0"></div>
<svg class="a" style="left:553px;top:69px" width="147" height="317" viewBox="553 69 147 317">
<g fill="none" stroke="#444" stroke-width="0.8">
<path d="M665.8 87.6L667.2 89L668.6 87.6"/>
<path d="M582 104.4L583.4 105.8L584.8 104.4"/>
<path d="M610 169.2L611.4 170.6L612.8 169.2"/>
<path d="M640 168.6L641.4 170L642.8 168.6"/>
<path d="M610 194L611.4 195.4L612.8 194"/>
<path d="M666.5 128.2L667.5 127L668.5 128.2M666.5 131.8L667.5 133L668.5 131.8" stroke-width="0.7"/>
<path d="M666.5 217.8L667.5 216.6L668.5 217.8M666.5 221.4L667.5 222.6L668.5 221.4" stroke-width="0.7"/>
<path d="M666.8 305.6L668 306.8L669.2 305.6"/>
<path d="M667 338.2L668.4 339.6L669.8 338.2"/>
<!-- rotate icons -->
<path d="M571.5 265.2Q571.5 260 566 259.6"/>
<path d="M579.5 265.2Q579.5 260 585 259.6"/>
<!-- autoshape icon -->
<path d="M655.4 341H653.6V335.2H659.4V337.4" stroke="#777" stroke-width="0.7"/>
<circle cx="658.2" cy="341" r="2.2" fill="#fff" stroke="#777" stroke-width="0.7"/>
</g>
<path d="M564.4 259.5L567 257.8V261.3Z" fill="#444"/>
<path d="M586.6 259.5L584 257.8V261.3Z" fill="#444"/>
<!-- flip icons -->
<path d="M622.8 258.3L618.4 265.9H622.8Z" fill="#333"/>
<path d="M622.8 258.3L627.2 265.9H622.8Z" fill="none" stroke="#333" stroke-width="0.8"/>
<path d="M642.2 258.5L634.3 262.2L642.2 262.2Z" fill="#333"/>
<path d="M642.2 262.2L634.3 262.2L642.2 265.9Z" fill="none" stroke="#333" stroke-width="0.8"/>
<!-- sliders -->
<rect x="568.6" y="130.5" width="43" height="1.5" rx="0.7" fill="#c6c6c6"/>
<circle cx="611.8" cy="131.1" r="3.2" fill="#fff" stroke="#555" stroke-width="0.8"/>
<rect x="568.6" y="219.4" width="43" height="1.5" rx="0.7" fill="#c6c6c6"/>
<circle cx="611.8" cy="220" r="3.2" fill="#fff" stroke="#555" stroke-width="0.8"/>
<!-- wrap images -->
<g fill="#bdbdbd">
<rect x="571" y="296.6" width="18" height="1.3"/><rect x="571" y="299" width="18" height="0.9" fill="#cfcfcf"/>
<rect x="571" y="301" width="18" height="0.9" fill="#cfcfcf"/><rect x="571" y="303" width="18" height="0.9" fill="#cfcfcf"/>
<rect x="571" y="305" width="18" height="0.9" fill="#cfcfcf"/><rect x="571" y="307" width="18" height="0.9" fill="#cfcfcf"/>
<rect x="571" y="309" width="18" height="0.9" fill="#cfcfcf"/><rect x="571" y="311.3" width="18" height="1.3"/>
<rect x="571" y="313.5" width="18" height="2"/>
<rect x="601" y="296.6" width="18.2" height="1.5"/><rect x="601" y="298.9" width="18.2" height="0.9"/>
<rect x="601" y="311.7" width="18.2" height="3.8"/>
<rect x="632" y="296.6" width="18" height="0.9" fill="#d6d6d6"/><rect x="632" y="298.6" width="18" height="0.9" fill="#d6d6d6"/>
<rect x="632" y="300.6" width="18" height="0.9" fill="#d6d6d6"/><rect x="632" y="302.6" width="18" height="0.9" fill="#d6d6d6"/>
<rect x="632" y="304.6" width="18" height="0.9" fill="#d6d6d6"/><rect x="632" y="306.6" width="18" height="0.9" fill="#d6d6d6"/>
<rect x="632" y="308.6" width="18" height="0.9" fill="#d6d6d6"/><rect x="632" y="310.6" width="18" height="0.9" fill="#d6d6d6"/>
<rect x="632" y="312.6" width="18" height="0.9" fill="#d6d6d6"/><rect x="632" y="314.6" width="18" height="0.9" fill="#d6d6d6"/>
</g>
<path id="bf" d="M580 303.4C578.8 301.6 576.6 300.7 574.4 300.8C574.2 303.4 575.2 305.8 577 306.9C576.2 308.6 577.2 311 579 312.2C579.6 311.4 580 310.4 580 309.2C580 310.4 580.4 311.4 581 312.2C582.8 311 583.8 308.6 583 306.9C584.8 305.8 585.8 303.4 585.6 300.8C583.4 300.7 581.2 301.6 580 303.4Z" fill="#333" stroke="#fff" stroke-width="1.2" paint-order="stroke"/>
<use href="#bf" x="30.2" y="0.4"/>
<use href="#bf" x="61" y="0.4"/>
<!-- right icon column -->
<rect x="678" y="164.2" width="22" height="16.3" fill="#7d858c"/>
<g fill="none" stroke="#888" stroke-width="0.8">
<path d="M688.6 83.4V89.8M690.4 83.4V89.8M687.6 83.4H691.4"/>
<rect x="684.9" y="104.9" width="8.7" height="6.2"/>
<path d="M684.9 106.8H693.6M684.9 108.9H693.6M687.8 104.9V111.1M690.7 104.9V111.1" stroke-width="0.6"/>
<rect x="685.4" y="125.9" width="7.6" height="7.2"/>
<path d="M685.6 131.8L688 129.6L689.6 130.8L690.6 129.9L692.8 131.6" stroke-width="0.6"/>
<rect x="686" y="145.9" width="6.6" height="9.7" rx="0.8"/>
<path d="M686 147.7H692.6M686 153.9H692.6"/>
<rect x="685.5" y="193.8" width="1.6" height="3.6"/><rect x="688.3" y="192" width="1.6" height="5.4"/><rect x="691.1" y="190" width="1.6" height="7.4"/>
<path d="M686 219.6Q689.3 216.4 692.6 219.6"/>
<rect x="684.9" y="233.6" width="8.9" height="6.4" rx="0.8"/>
<path d="M684.9 233.8L689.35 237.4L693.8 233.8" stroke-width="0.7"/>
</g>
<path d="M688.6 83.4Q686.2 83.6 686.2 85.4Q686.2 87.2 688.6 87.2Z" fill="#888"/>
<g fill="none" stroke="#fff" stroke-width="0.8">
<path d="M687.5 173.3H685.5V168.2H690.5V170.4"/>
<circle cx="690.2" cy="173" r="2.3" fill="#7d858c"/>
</g>
<!-- status bar icons -->
</svg>
<div class="t" style="left:686px;top:214.2px;font-size:6.8px;color:#888">T</div>
<div class="t" style="left:689px;top:215.4px;font-size:5px;color:#888">a</div>
<style>
.cb{background:#fff;border:0.8px solid #cfcfcf;border-radius:1px}
.hr{left:562px;width:110px;height:1px;background:#dedede}
</style>
<!-- status bar -->
<div id="sb" class="a"></div>
<svg class="a" style="left:0;top:386px" width="700" height="14" viewBox="0 386 700 14">
<g fill="none" stroke="#d0d0d0" stroke-width="0.8"><path d="M59.4 387V400M417.9 387V400M537.6 387V400M565.8 387V400"/></g>
<g fill="none" stroke="#444" stroke-width="0.8">
<path d="M65.6 389.6H72.6M65.6 391.2H72.6M65.6 392.8H72.6" stroke-width="0.7"/>
<path d="M497.2 393.2L498.4 394.4L499.6 393.2"/>
<circle cx="509.3" cy="393.5" r="4.5" fill="#4a4a4a" stroke="none"/>
<ellipse cx="507" cy="393.5" rx="0.75" ry="1.5" fill="#f1f1f1" stroke="none"/>
<ellipse cx="509.3" cy="393.5" rx="0.75" ry="1.5" fill="#f1f1f1" stroke="none"/>
<ellipse cx="511.6" cy="393.5" rx="0.75" ry="1.5" fill="#f1f1f1" stroke="none"/>
<path d="M525.8 395L527.4 396.6L531 393" stroke-width="0.9"/>
<path d="M545 389.6H551.2L548 392.5M545 389.6V397.4H553V394" stroke-width="0.9"/>
<path d="M547.5 395.5L548.5 393L552.5 389.2L553.5 390.2L549.5 394L547.5 395.5Z" fill="#444" stroke="none"/>
<path d="M556.3 392.8L557.5 394L558.7 392.8"/>
<rect x="573.4" y="390" width="7.6" height="7.6" stroke-width="0.9"/>
<path d="M574.6 391.2L576.4 393M579.8 391.2L578 393M574.6 396.4L576.4 394.6M579.8 396.4L578 394.6" stroke-width="0.8"/>
<path d="M589.8 391.8V396.2M598.8 391.8V396.2M590.6 394H598M590.6 394L592 392.8M590.6 394L592 395.2M598 394L596.6 392.8M598 394L596.6 395.2" stroke-width="0.8"/>
<path d="M609 393.8H615" stroke-width="0.9"/>
<path d="M669 393.8H675.6M672.3 390.5V397.1" stroke-width="0.9"/>
</g>
</svg>
<div class="t" style="left:66px;top:396px;font-size:3.4px;color:#444;font-weight:bold">123</div>
<div class="t" style="left:522.2px;top:392.2px;font-size:4.4px;color:#555;font-weight:bold;font-style:italic">abc</div>
<div class="t sbt" style="left:22.8px;top:393.6px;font-size:6.5px">Page 1 of 1</div>
<div class="t sbt" style="left:77px;top:393.6px">Word count</div>
<div class="t sbt" style="left:236.2px;top:393.6px">All changes saved</div>
<div class="t sbt" style="left:425.4px;top:393.6px">English (United States)</div>
<div class="t sbt" style="left:624.2px;top:393.6px;font-size:6.42px">Zoom 100%</div>
<style>.sbt{font-size:6.7px;color:#333}</style>
</body></html>
